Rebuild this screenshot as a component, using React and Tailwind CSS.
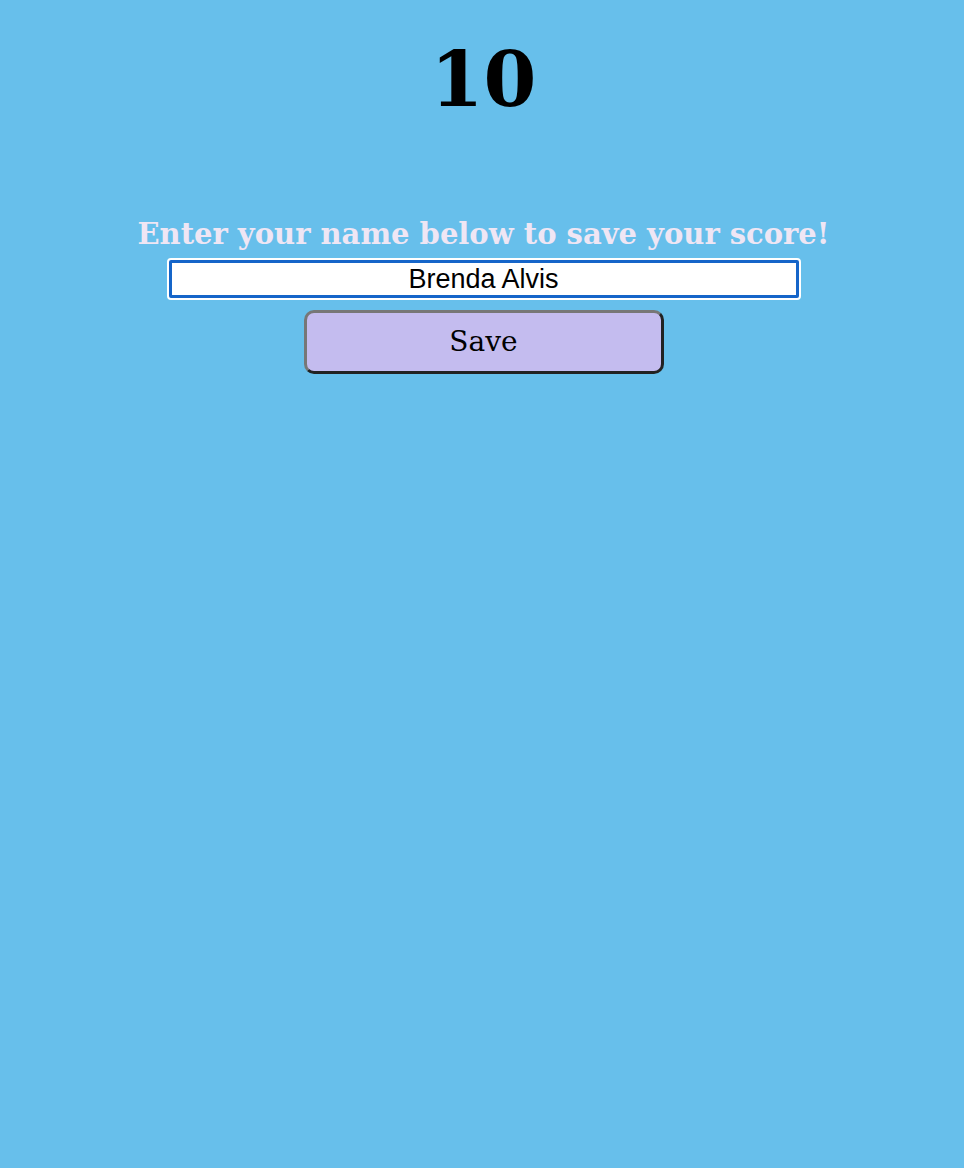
export default function App() {
  return (
    <div className="min-h-[1168px] w-full bg-[#67bfeb] flex flex-col items-center pl-[3px]">
      <h1 className="mt-[38px] text-[76px] leading-[84px] font-bold text-black font-['DejaVu_Serif',serif]">
        10
      </h1>
      <p className="mt-[94px] text-[29px] leading-[36px] font-bold text-[#efe6f4] font-['DejaVu_Serif',serif]">
        Enter your name below to save your score!
      </p>
      <input
        defaultValue="Brenda Alvis"
        className="mt-[6px] w-[634px] h-[42px] bg-white border-[2px] border-white rounded-[4px] outline-[3px] outline-[#1565c9] outline -outline-offset-[5px] text-center text-[27px] text-black font-['Liberation_Sans',Arial,sans-serif]"
      />
      <button className="mt-[10px] w-[360px] h-[64px] bg-[#c4bcef] rounded-[10px] border-[3px] border-t-[#777777] border-l-[#777777] border-b-[#222222] border-r-[#222222] text-[28px] text-black font-['DejaVu_Serif',serif]">
        Save
      </button>
    </div>
  );
}
